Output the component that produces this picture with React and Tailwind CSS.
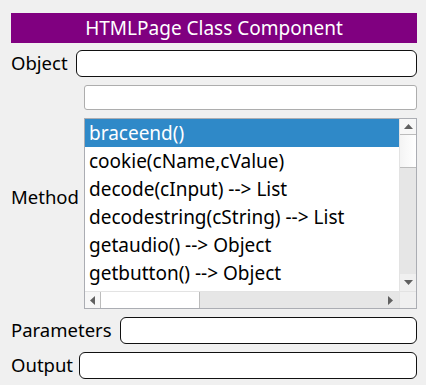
import React from "react";

const items = [
  "braceend()",
  "cookie(cName,cValue)",
  "decode(cInput) --> List",
  "decodestring(cString) --> List",
  "getaudio() --> Object",
  "getbutton() --> Object",
];

function Field({ label, w }) {
  return (
    <div className="flex items-center gap-[7px]">
      <span className={"text-[18.5px] leading-none text-black whitespace-nowrap " + w}>{label}</span>
      <div className="flex-1 h-[27px] bg-white border-[1.5px] border-[#111] rounded-[6px]" />
    </div>
  );
}

export default function App() {
  return (
    <div
      className="w-[426px] h-[385px] bg-[#f0f0f0] pt-[13px] pl-[11px] pr-[9px] flex flex-col"
      style={{ fontFamily: '"Noto Sans", sans-serif' }}
    >
      <div className="h-[30px] bg-[#800080] text-white text-[19px] flex items-center justify-center">
        HTMLPage Class Component
      </div>
      <div className="mt-[7px]">
        <Field label="Object" w="w-[58px]" />
      </div>
      <div className="mt-[8px] flex items-center gap-[8px]">
        <span className="w-[65px] text-[18.5px] leading-none text-black">Method</span>
        <div className="flex-1 flex flex-col gap-[8px]">
          <div className="h-[25px] bg-white border border-[#adadad] rounded-[3px]" />
          <div className="h-[191px] bg-white border border-[#abadb3] flex flex-col">
            <div className="flex flex-1 min-h-0">
              <div className="flex-1 overflow-hidden">
                {items.map((t, i) => (
                  <div
                    key={t}
                    className={
                      "h-[28px] leading-[28px] pl-[4px] text-[19px] whitespace-nowrap " +
                      (i === 0 ? "bg-[#2f89c8] text-white" : "text-black")
                    }
                  >
                    {t}
                  </div>
                ))}
              </div>
              <div className="w-[17px] flex flex-col border-l border-[#e3e3e3] bg-[#e6e6e6]">
                <div className="h-[16px] bg-[#f7f7f7] border-b border-[#bcbcbc] flex items-center justify-center">
                  <svg width="9" height="5" viewBox="0 0 9 5"><path d="M0 5 L4.5 0 L9 5 Z" fill="#606060" /></svg>
                </div>
                <div className="h-[33px] bg-gradient-to-r from-[#f4f4f4] to-[#ffffff] border-b border-[#bcbcbc]" />
                <div className="flex-1" />
                <div className="h-[17px] bg-[#f0f0f0] flex items-center justify-center">
                  <svg width="9" height="5" viewBox="0 0 9 5"><path d="M0 0 L4.5 5 L9 0 Z" fill="#606060" /></svg>
                </div>
              </div>
            </div>
            <div className="h-[17px] flex border-t border-[#e3e3e3]">
              <div className="w-[16px] bg-[#f7f7f7] border-r border-[#bcbcbc] flex items-center justify-center">
                <svg width="5" height="9" viewBox="0 0 5 9"><path d="M5 0 L0 4.5 L5 9 Z" fill="#606060" /></svg>
              </div>
              <div className="w-[99px] bg-white border-r border-[#bcbcbc]" />
              <div className="flex-1 bg-[#e6e6e6]" />
              <div className="w-[17px] bg-[#e6e6e6] flex items-center justify-center">
                <svg width="5" height="9" viewBox="0 0 5 9"><path d="M0 0 L5 4.5 L0 9 Z" fill="#606060" /></svg>
              </div>
              <div className="w-[17px] bg-[#f0f0f0] border-l border-[#e3e3e3]" />
            </div>
          </div>
        </div>
      </div>
      <div className="mt-[8px]">
        <Field label="Parameters" w="w-[102px]" />
      </div>
      <div className="mt-[8px]">
        <Field label="Output" w="w-[61px]" />
      </div>
    </div>
  );
}
